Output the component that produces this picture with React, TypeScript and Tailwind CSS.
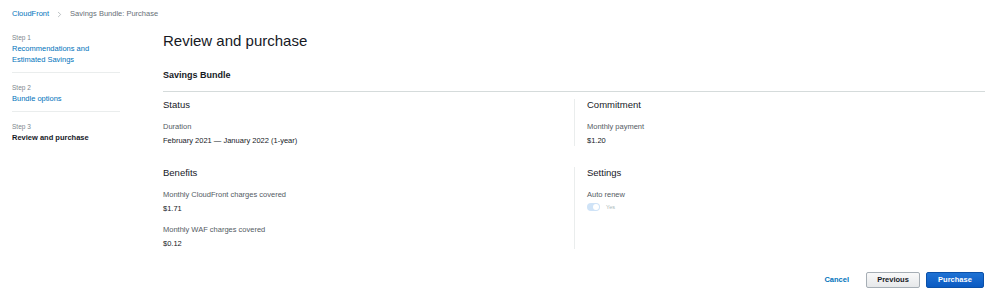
import { ChevronRight } from 'lucide-react';

function Field({ label, value }: { label: string; value: string }) {
  return (
    <div className="mt-[10px]">
      <div className="text-[7.5px] leading-[11px] text-[#545b64]">{label}</div>
      <div className="mt-[3px] text-[7.5px] leading-[11px] text-[#16191f]">{value}</div>
    </div>
  );
}

function StepItem({ step, title, active, last }: { step: string; title: string[]; active?: boolean; last?: boolean }) {
  return (
    <div className={last ? '' : 'border-b border-[#eaeded] pb-[7px]'}>
      <div className="text-[6.5px] leading-[11px] text-[#7d868c]">{step}</div>
      {title.map((t) => (
        <div
          key={t}
          className={
            active
              ? 'text-[7.5px] leading-[11px] font-bold text-[#16191f]'
              : 'text-[7.5px] leading-[11px] text-[#0073bb]'
          }
        >
          {t}
        </div>
      ))}
    </div>
  );
}

export default function App() {
  return (
    <div className="antialiased w-[1000px] h-[302px] bg-white text-[#16191f] font-['Liberation_Sans',Arial,sans-serif] overflow-hidden">
      <div className="flex items-center gap-[6px] px-[12px] pt-[8px] h-[20px] text-[7.5px] leading-[12px]">
        <span className="text-[#0073bb]">CloudFront</span>
        <ChevronRight className="w-[9px] h-[9px] text-[#879196]" strokeWidth={1.5} />
        <span className="text-[#687078]">Savings Bundle: Purchase</span>
      </div>

      <div className="flex">
        <div className="w-[108px] ml-[12px] pt-[12px] flex flex-col gap-[9px] shrink-0">
          <StepItem step="Step 1" title={['Recommendations and', 'Estimated Savings']} />
          <StepItem step="Step 2" title={['Bundle options']} />
          <StepItem step="Step 3" title={['Review and purchase']} active last />
        </div>

        <div className="ml-[43px] mr-[15px] flex-1">
          <h1 className="mt-[11px] text-[15px] leading-[20px] font-normal text-[#16191f]">Review and purchase</h1>

          <div className="mt-[18px] pb-[10px] border-b border-[#d5dbdb] text-[9px] leading-[12px] font-bold">
            Savings Bundle
          </div>

          <div className="grid grid-cols-2 mt-[7px]">
            <div>
              <div className="text-[9.5px] leading-[12px]">Status</div>
              <Field label="Duration" value="February 2021 — January 2022 (1-year)" />
            </div>
            <div className="border-l border-[#eaeded] pl-[12px]">
              <div className="text-[9.5px] leading-[12px]">Commitment</div>
              <Field label="Monthly payment" value="$1.20" />
            </div>

            <div className="mt-[21px]">
              <div className="text-[9.5px] leading-[12px]">Benefits</div>
              <Field label="Monthly CloudFront charges covered" value="$1.71" />
              <Field label="Monthly WAF charges covered" value="$0.12" />
            </div>
            <div className="mt-[21px] border-l border-[#eaeded] pl-[12px]">
              <div className="text-[9.5px] leading-[12px]">Settings</div>
              <div className="mt-[10px] text-[7.5px] leading-[11px] text-[#545b64]">Auto renew</div>
              <div className="mt-[3px] flex items-center gap-[6px]">
                <div className="w-[13px] h-[8px] rounded-full bg-[#cfe3f7] flex items-center justify-end pr-[1px]">
                  <div className="w-[6px] h-[6px] rounded-full bg-white" />
                </div>
                <span className="text-[5.5px] leading-[8px] text-[#aab7b8]">Yes</span>
              </div>
            </div>
          </div>

          <div className="mt-[23px] flex items-center justify-end mr-[1px]">
            <button className="text-[7.5px] font-bold text-[#0073bb] mr-[17px]">Cancel</button>
            <button className="w-[54px] h-[16px] rounded-[2px] border border-[#a6aeb5] bg-gradient-to-b from-[#f9f9f9] to-[#e6e8ea] text-[7.5px] font-bold text-[#16191f] mr-[6px]">
              Previous
            </button>
            <button className="w-[58px] h-[16px] rounded-[2px] border border-[#0b50a8] bg-gradient-to-b from-[#1f72d4] to-[#0a5ac2] text-[7.5px] font-bold text-white">
              Purchase
            </button>
          </div>
        </div>
      </div>
    </div>
  );
}
